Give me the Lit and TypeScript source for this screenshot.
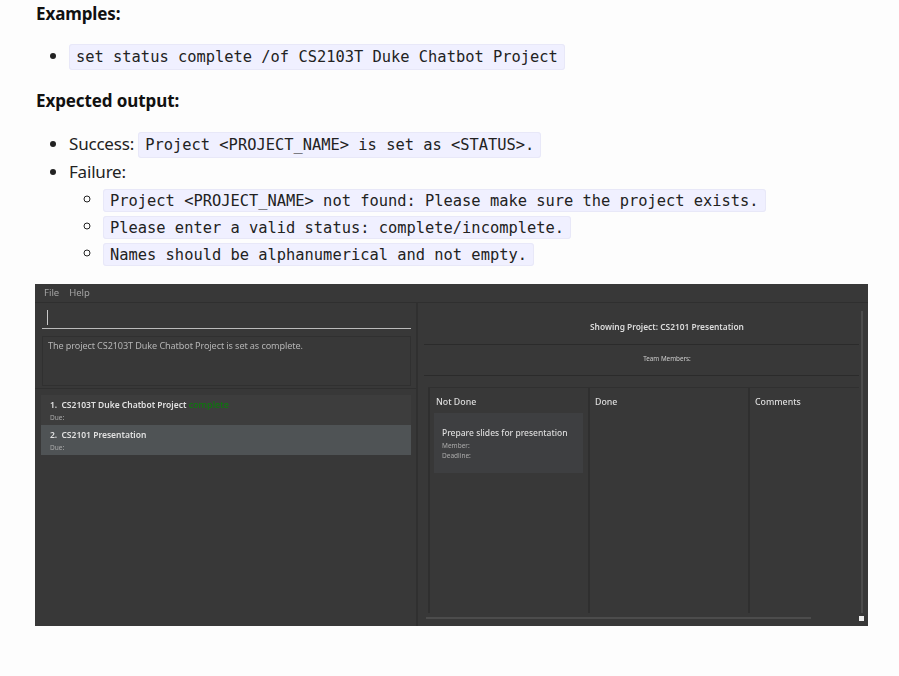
import { LitElement, html, css } from "lit";
import { customElement } from "lit/decorators.js";

@customElement("app-root")
export class AppRoot extends LitElement {
  static styles = css`
    :host { display: block; height: 676px; overflow: hidden; background: #fdfdfd; color: #111; font-family: "Noto Sans", "Open Sans", sans-serif; font-size: 17px; }
    .page { padding: 3px 31px 0 36px; }
    .h { font-weight: 700; font-size: 17px; line-height: 21px; margin: 0; letter-spacing: -0.1px; }
    .h2 { margin-top: 19px; }
    ul { margin: 0; padding: 0 0 0 33px; list-style: disc; }
    .l1 { margin-top: 18px; }
    .l1b { margin-top: 19px; }
    li { line-height: 28px; letter-spacing: -0.2px; color: #222; }
    .l2 { list-style: circle; padding-left: 34px; margin-top: 0; }
    .l2 li { line-height: 27px; height: 27px; }
    .fail { line-height: 27px; margin-top: -1px; }
    code { font-family: "DejaVu Sans Mono", monospace; font-size: 15.4px; letter-spacing: 0; color: #222; background: #f0f0ff; border: 1px solid #e8e8f8; border-radius: 3px; padding: 3px 6px; }
    .l2 code { padding: 1.5px 6px; }
    .win { margin: 18px 0 0 -1px; width: 833px; height: 342px; background: #383838; display: flex; flex-direction: column; position: relative; overflow: hidden; font-family: "Noto Sans", sans-serif; color: #ddd; filter: blur(0.25px); }
    .menu { height: 19px; flex: none; box-sizing: border-box; padding: 0 0 2px 9px; border-bottom: 1px solid #2f2f2f; display: flex; gap: 10px; align-items: center; font-size: 9.5px; color: #a4a4a4; }
    .body { flex: 1; display: flex; min-height: 0; }
    .left { width: 383px; flex: none; border-right: 2px solid #303030; display: flex; flex-direction: column; box-sizing: border-box; }
    .cmd { height: 26px; margin: 0 5px 0 7px; border-bottom: 1px solid #bbb; flex: none; box-sizing: border-box; padding: 7px 0 0 5px; }
    .caret { width: 1px; height: 15px; background: #c8c8c8; }
    .res { height: 50px; margin: 7px 5px 0 7px; border: 1px solid #303030; flex: none; box-sizing: border-box; padding: 2px 5px; font-size: 9.1px; color: #b4b4b4; letter-spacing: -0.1px; }
    .sep { height: 1px; background: #2f2f2f; margin-top: 2px; flex: none; }
    .list { padding: 6px 5px 0 6px; display: flex; flex-direction: column; }
    .card { height: 30px; background: #3d3d3d; box-sizing: border-box; padding: 2px 9px; font-weight: 600; font-size: 8.5px; color: #e0e0e0; }
    .card.sel { background: #4f5355; }
    .card .t { line-height: 15px; }
    .card .t b { font-weight: 600; margin-left: 2px; }
    .card .ok { color: #0c7a0c; font-weight: 500; font-size: 9px; }
    .card .due { font-size: 6.5px; line-height: 8px; margin-top: 2px; font-weight: 400; color: #aaa; }
    .right { flex: 1; min-width: 0; margin: 5px 9px 0 6px; overflow: hidden; }
    .rin { width: 486px; display: flex; flex-direction: column; }
    .rh { height: 37px; flex: none; box-sizing: border-box; padding-top: 1px; border-bottom: 1px solid #2b2b2b; display: flex; align-items: center; justify-content: center; font-size: 8.4px; font-weight: 600; color: #ddd; }
    .rm { height: 31px; flex: none; box-sizing: border-box; padding-bottom: 3px; border-bottom: 1px solid #2b2b2b; display: flex; align-items: center; justify-content: center; font-size: 6.3px; color: #ccc; }
    .cols { margin: 11px 0 0 4px; height: 226px; display: flex; border-top: 1px solid #303030; box-sizing: border-box; }
    .col { width: 160px; flex: none; box-sizing: border-box; border-left: 2px solid #2f2f2f; padding: 8px 6px 0 3px; }
    .col.last { flex: 1; width: auto; }
    .ct { font-size: 8.8px; font-weight: 500; padding-left: 2px; line-height: 12px; color: #ddd; }
    .col:first-child .ct { padding-left: 3px; }
    .task { margin-top: 5px; margin-left: 1px; height: 60px; box-sizing: border-box; background: #3e3f41; padding: 14px 8px; width: 149px; font-size: 8.5px; color: #ddd; line-height: 12px; font-weight: 500; white-space: nowrap; }
    .task div { font-size: 6.5px; line-height: 10px; color: #aaa; font-weight: 400; position: relative; }
    .task .mem { margin-top: 2px; }
    .vbar { position: absolute; left: 826px; top: 27px; height: 302px; width: 2px; background: #4c4c4c; }
    .hbar { position: absolute; left: 391px; top: 333px; height: 2px; width: 385px; background: #4c4c4c; }
    .corner { position: absolute; left: 824px; top: 332px; width: 5px; height: 5px; background: #eee; }
  `;

  render() {
    return html`<div class="page">
      <p class="h">Examples:</p>
      <ul class="l1"><li><code>set status complete /of CS2103T Duke Chatbot Project</code></li></ul>
      <p class="h h2">Expected output:</p>
      <ul class="l1b">
        <li>Success: <code>Project &lt;PROJECT_NAME&gt; is set as &lt;STATUS&gt;.</code></li>
        <li class="fail">Failure:
          <ul class="l2">
            <li><code>Project &lt;PROJECT_NAME&gt; not found: Please make sure the project exists.</code></li>
            <li><code>Please enter a valid status: complete/incomplete.</code></li>
            <li><code>Names should be alphanumerical and not empty.</code></li>
          </ul>
        </li>
      </ul>
      <div class="win">
        <div class="menu"><span>File</span><span>Help</span></div>
        <div class="body">
          <div class="left">
            <div class="cmd"><div class="caret"></div></div>
            <div class="res">The project CS2103T Duke Chatbot Project is set as complete.</div>
            <div class="sep"></div>
            <div class="list">
              <div class="card"><div class="t">1. <b>CS2103T Duke Chatbot Project</b> <span class="ok">complete</span></div><div class="due">Due:</div></div>
              <div class="card sel"><div class="t">2. <b>CS2101 Presentation</b></div><div class="due">Due:</div></div>
            </div>
          </div>
          <div class="right"><div class="rin">
            <div class="rh">Showing Project: CS2101 Presentation</div>
            <div class="rm">Team Members:</div>
            <div class="cols">
              <div class="col"><div class="ct">Not Done</div><div class="task">Prepare slides for presentation<div class="mem">Member:</div><div>Deadline:</div></div></div>
              <div class="col"><div class="ct">Done</div></div>
              <div class="col last"><div class="ct">Comments</div></div>
            </div>
          </div></div>
        </div>
        <div class="vbar"></div><div class="hbar"></div><div class="corner"></div>
      </div>
    </div>`;
  }
}
